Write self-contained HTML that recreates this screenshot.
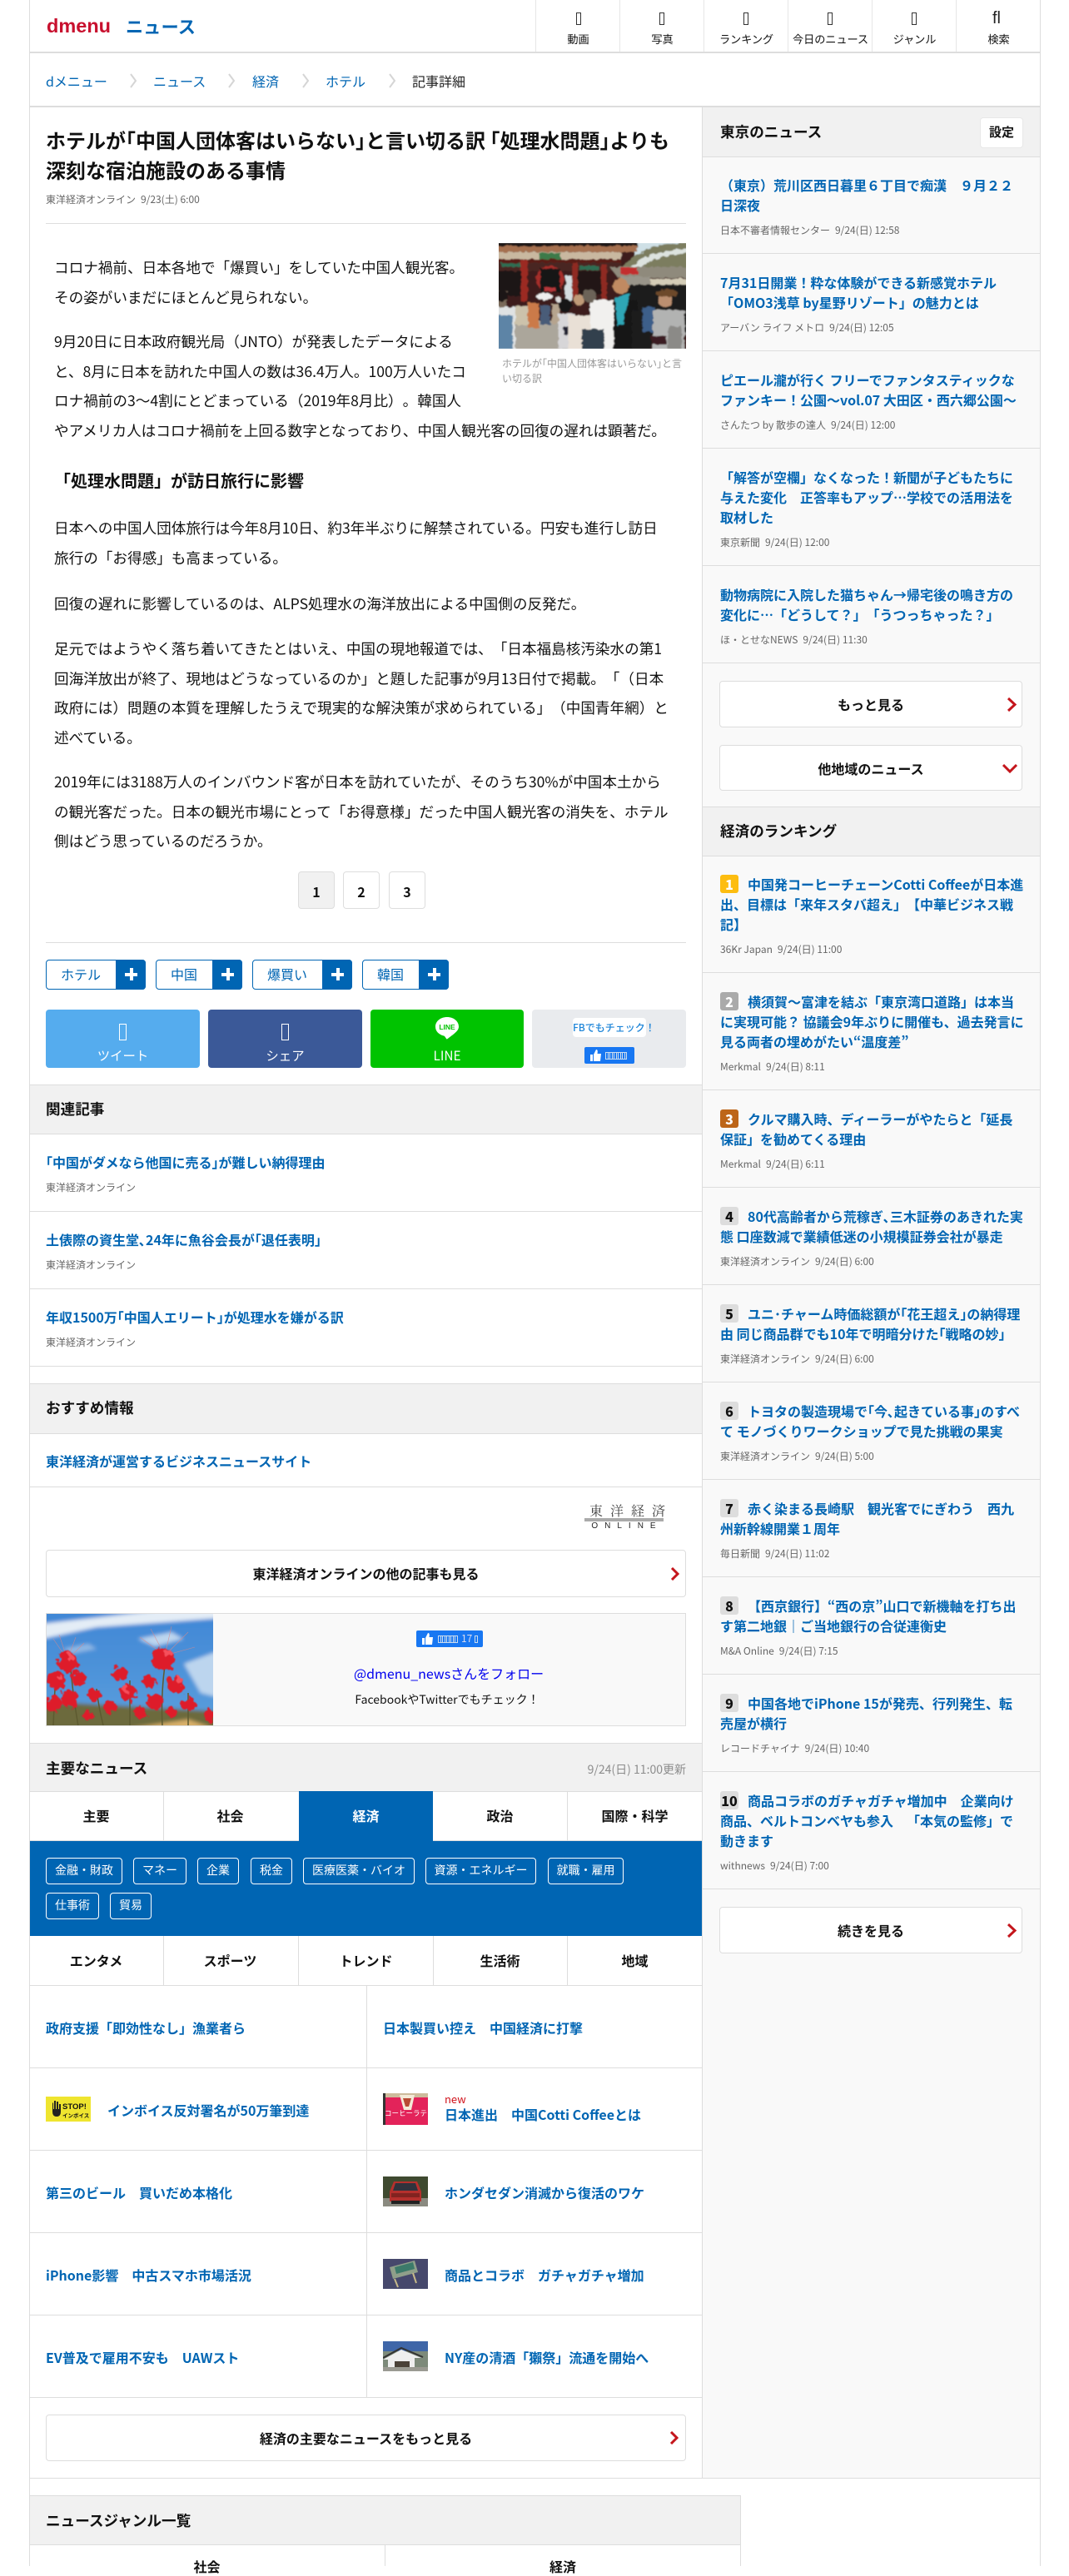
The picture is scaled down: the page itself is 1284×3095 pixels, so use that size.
<!DOCTYPE html>
<html lang="ja"><head><meta charset="utf-8"><title>ホテルが｢中国人団体客はいらない｣と言い切る訳</title>
<style>
html,body{margin:0;padding:0}
body{width:1284px;height:3083px;position:relative;overflow:hidden;background:#fff;color:#111;font-family:"Noto Sans CJK JP","Liberation Sans",sans-serif;font-size:16px;text-spacing-trim:space-all;font-variant-east-asian:normal}
.a{position:absolute;white-space:nowrap}
.v{position:absolute;width:1px;background:#ddd}
.h{position:absolute;height:1px;background:#ddd}
.navl{position:absolute;top:38px;width:101px;text-align:center;font-size:13.2px;line-height:18px;letter-spacing:-.1px}
.tofu{position:absolute;box-sizing:border-box;border:1px solid #333}
.ts{position:absolute;box-sizing:border-box;height:9px;border-top:1px solid #cde;border-bottom:1px solid #cde;background:repeating-linear-gradient(90deg,#cde 0 1px,transparent 1px 3px,#cde 3px 4px,transparent 4px 5px)}
.bc{position:absolute;top:86px;line-height:22px;font-size:16px;color:#0065b3;white-space:nowrap}
.p{position:absolute;left:65px;font-size:17.6px;line-height:35.5px;white-space:nowrap;color:#111}
.sh{position:absolute;top:1213px;width:185px;height:70px;border-radius:4px;color:#fff;text-align:center;font-size:15.4px}
.sh span{position:absolute;left:0;right:0;top:44px;line-height:22px}
.tag{position:absolute;top:1153px;height:36px;box-sizing:border-box;border:1px solid #0065b3;border-radius:4px;color:#0065b3;line-height:33px;padding-left:17px;background:#fff}
.tag b{position:absolute;right:-1px;top:-1px;width:36px;height:36px;background:#0065b3;border-radius:0 4px 4px 0}
.tag b:before{content:"";position:absolute;left:11px;top:16px;width:15px;height:4px;background:#fff}
.tag b:after{content:"";position:absolute;left:17px;top:10px;width:4px;height:15px;background:#fff}
.pg{position:absolute;top:1047px;width:44px;height:45px;box-sizing:border-box;border:1px solid #ddd;border-radius:4px;text-align:center;font-weight:700;line-height:46px;font-size:16px}
.sec{position:absolute;background:#f1f1f1;border-top:1px solid #ddd;border-bottom:1px solid #ddd;box-sizing:border-box}
.sec div{position:absolute;left:19px;top:0;font-size:17.6px;font-weight:700;white-space:nowrap}
.lnk{position:absolute;color:#0065b3;font-weight:700;white-space:nowrap;line-height:24px}
.m{position:absolute;left:55px;font-size:12px;color:#666;line-height:18px;white-space:nowrap}
.btn{position:absolute;box-sizing:border-box;border:1px solid #ddd;border-radius:4px;background:#fff;text-align:center;font-weight:700}
.btn svg{position:absolute}
.chip{position:absolute;height:32px;box-sizing:border-box;border:1px solid #fff;border-radius:4px;color:#fff;font-size:14px;line-height:29px;text-align:center;white-space:nowrap}
.tab{position:absolute;width:161px;text-align:center;font-weight:700;line-height:24px}
.sb{position:absolute;left:844px;top:129px;width:405px;height:2848px;background:#f9f9f9}
.it{position:absolute;left:0;width:405px;box-sizing:border-box;border-bottom:1px solid #ddd}
.it .t{position:absolute;left:21px;top:22px;color:#0065b3;font-weight:700;line-height:24px;white-space:nowrap;font-size:16px}
.it .d{position:absolute;left:21px;bottom:18px;font-size:12px;line-height:18px;color:#666;white-space:nowrap}
.bd{display:inline-block;width:22px;height:22px;border-radius:3px;text-align:center;line-height:22px;margin-right:11px;font-size:16px;vertical-align:0;background:#ddd;color:#111}
</style></head><body>

<div class="v" style="left:35px;top:0;height:3083px"></div>
<div class="v" style="left:1249px;top:0;height:3083px"></div>

<!-- header -->
<div class="a" style="left:56px;top:14px;font:700 23.500px/34px 'Liberation Sans',sans-serif;color:#c8102e">dmenu</div>
<div class="a" style="left:151px;top:16px;font-size:21px;font-weight:700;line-height:32px;color:#0065b3;letter-spacing:.3px">ニュース</div>
<div class="v" style="left:643px;top:0;height:63px;background:#e6e6e6"></div>
<div class="v" style="left:744px;top:0;height:63px;background:#e6e6e6"></div>
<div class="v" style="left:845px;top:0;height:63px;background:#e6e6e6"></div>
<div class="v" style="left:946px;top:0;height:63px;background:#e6e6e6"></div>
<div class="v" style="left:1047px;top:0;height:63px;background:#e6e6e6"></div>
<div class="v" style="left:1148px;top:0;height:63px;background:#e6e6e6"></div>
<div class="tofu" style="left:692px;top:15px;width:6px;height:15px"></div>
<div class="tofu" style="left:792px;top:15px;width:6px;height:15px"></div>
<div class="tofu" style="left:893px;top:15px;width:6px;height:15px"></div>
<div class="tofu" style="left:994px;top:15px;width:6px;height:15px"></div>
<div class="tofu" style="left:1095px;top:15px;width:6px;height:15px"></div>
<div class="a" style="left:1192px;top:10px;font:400 20px/24px 'Liberation Sans',sans-serif;color:#222">fl</div>
<div class="navl" style="left:644px">動画</div>
<div class="navl" style="left:745px">写真</div>
<div class="navl" style="left:846px">ランキング</div>
<div class="navl" style="left:947px">今日のニュース</div>
<div class="navl" style="left:1048px">ジャンル</div>
<div class="navl" style="left:1149px">検索</div>
<div class="h" style="left:35px;top:62px;width:1214px;height:2px"></div>

<!-- breadcrumb -->
<div class="bc" style="left:55px">dメニュー</div>
<div class="bc" style="left:184px">ニュース</div>
<div class="bc" style="left:303px">経済</div>
<div class="bc" style="left:391px">ホテル</div>
<div class="bc" style="left:495px;color:#222">記事詳細</div>
<svg class="a" style="left:0;top:88px" width="500" height="18" fill="none" stroke="#d5d5d5" stroke-width="2"><path d="M157 1l6 8-6 8M275 1l6 8-6 8M364 1l6 8-6 8M468 1l6 8-6 8"/></svg>
<div class="h" style="left:35px;top:127px;width:1214px;height:2px"></div>

<div class="v" style="left:843px;top:129px;height:2848px"></div>

<!-- article -->
<div class="a" style="left:55px;top:150px;font-size:24px;font-weight:700;line-height:36px;color:#111">ホテルが｢中国人団体客はいらない｣と言い切る訳 ｢処理水問題｣よりも<br>深刻な宿泊施設のある事情</div>
<div class="a" style="left:55px;top:231px;font-size:12px;line-height:18px;color:#666">東洋経済オンライン&ensp;9/23(土) 6:00</div>
<div class="h" style="left:55px;top:268px;width:769px"></div>

<svg class="a" style="left:599px;top:292px" width="225" height="127" viewBox="0 0 675 380">
<defs><filter id="b1" x="0" y="0" width="1" height="1"><feTurbulence type="fractalNoise" baseFrequency=".06" numOctaves="2" seed="4"/><feDisplacementMap in="SourceGraphic" scale="14"/><feGaussianBlur stdDeviation="2.500"/></filter><clipPath id="c1"><rect width="675" height="380"/></clipPath></defs>
<g clip-path="url(#c1)"><g filter="url(#b1)">
<rect x="-10" y="-10" width="700" height="400" fill="#3d1f1b"/>
<path d="M490-10h200v90l-200 30z" fill="#cfe0e6"/>
<rect x="-10" y="-10" width="510" height="22" fill="#1c1512"/><rect x="-10" y="10" width="510" height="22" fill="#a5704f"/>
<rect x="-10" y="32" width="450" height="26" fill="#c9b8a0"/><rect x="145" y="35" width="80" height="24" fill="#3d7a4a"/>
<rect x="-10" y="58" width="450" height="12" fill="#5a1d18"/>
<rect x="-10" y="70" width="450" height="30" fill="#4a2620"/><rect x="10" y="72" width="70" height="14" fill="#2f6e52"/><rect x="290" y="82" width="70" height="14" fill="#2f6e52"/>
<rect x="80" y="60" width="24" height="150" fill="#9c2b22"/><rect x="265" y="70" width="20" height="130" fill="#8f2a20"/><rect x="370" y="75" width="18" height="130" fill="#8f2a20"/>
<rect x="-10" y="100" width="90" height="90" fill="#1e1512"/><rect x="285" y="100" width="85" height="85" fill="#241714"/>
<ellipse cx="185" cy="130" rx="50" ry="48" fill="#a62d2a"/><rect x="150" y="92" width="70" height="85" fill="#161212"/><rect x="165" y="160" width="40" height="14" fill="#b5383a"/>
<rect x="240" y="118" width="25" height="90" fill="#d5dde0"/>
<path d="M440 90Q520 10 600 5L690-5v95z" fill="#7c7d5e"/><path d="M475 85Q540 25 690 20v15q-125 5-185 60z" fill="#dde3df"/>
<path d="M400 85h290v40H430z" fill="#8f8a7c"/><rect x="440" y="88" width="60" height="24" fill="#c22d2e"/>
<rect x="545" y="128" width="145" height="26" fill="#d4cdb8"/><rect x="440" y="120" width="105" height="30" fill="#99958a"/>
<rect x="440" y="150" width="250" height="180" fill="#1c1c1b"/>
<path d="M60 280h320v110H50z" fill="#aba69b"/>
<rect x="-10" y="170" width="40" height="220" fill="#7a6a5a"/><rect x="-10" y="230" width="70" height="160" fill="#dfe2e3"/><rect x="-10" y="260" width="60" height="130" fill="#5d84a6"/><circle cx="12" cy="190" r="22" fill="#1a1412"/>
<ellipse cx="165" cy="192" rx="30" ry="13" fill="#eee"/><circle cx="215" cy="203" r="10" fill="#ddd"/>
<rect x="60" y="225" width="55" height="70" fill="#ccc2ab"/><rect x="105" y="215" width="40" height="90" fill="#cb7a4a"/><rect x="150" y="225" width="35" height="70" fill="#485c78"/><rect x="190" y="220" width="30" height="70" fill="#b6a48e"/>
<rect x="215" y="255" width="60" height="125" fill="#d7d6d8"/><rect x="235" y="300" width="40" height="30" fill="#223"/><circle cx="240" cy="225" r="24" fill="#191414"/>
<rect x="250" y="260" width="90" height="130" fill="#e9e0d6"/><circle cx="290" cy="205" r="19" fill="#c09a78"/>
<rect x="330" y="205" width="85" height="185" fill="#f1f0ee"/><circle cx="328" cy="190" r="24" fill="#6c6359"/><rect x="300" y="310" width="80" height="80" fill="#30404e"/>
<rect x="415" y="205" width="85" height="185" fill="#151515"/><circle cx="440" cy="155" r="28" fill="#c08a62"/><path d="M418 195l55-15-25 110-20 10z" fill="#2fa6b6"/>
<rect x="480" y="240" width="70" height="150" fill="#1a1a1f"/><rect x="518" y="230" width="45" height="90" fill="#3d5f8a"/>
<rect x="555" y="240" width="115" height="150" fill="#b2b3b2"/><circle cx="600" cy="205" r="26" fill="#bb8f70"/><ellipse cx="605" cy="180" rx="40" ry="14" fill="#6d4a2c"/><rect x="610" y="300" width="50" height="90" fill="#8b8a87"/>
<rect x="555" y="335" width="50" height="30" fill="#3a1d20"/>
</g></g></svg>
<div class="a" style="left:603px;top:428px;font-size:12px;line-height:18px;color:#999">ホテルが｢中国人団体客はいらない｣と言<br>い切る訳</div>

<div class="p" style="top:304px">コロナ禍前、日本各地で「爆買い」をしていた中国人観光客。<br>その姿がいまだにほとんど見られない。</div>
<div class="p" style="top:393px">9月20日に日本政府観光局（JNTO）が発表したデータによる<br>と、8月に日本を訪れた中国人の数は36.4万人。100万人いたコ<br>ロナ禍前の3～4割にとどまっている（2019年8月比）。韓国人<br>やアメリカ人はコロナ禍前を上回る数字となっており、中国人観光客の回復の遅れは顕著だ。</div>
<div class="a" style="left:65px;top:562px;font-size:20px;font-weight:700;line-height:30px">「処理水問題」が訪日旅行に影響</div>
<div class="p" style="top:617px">日本への中国人団体旅行は今年8月10日、約3年半ぶりに解禁されている。円安も進行し訪日<br>旅行の「お得感」も高まっている。</div>
<div class="p" style="top:708px">回復の遅れに影響しているのは、ALPS処理水の海洋放出による中国側の反発だ。</div>
<div class="p" style="top:762px">足元ではようやく落ち着いてきたとはいえ、中国の現地報道では、「日本福島核汚染水の第1<br>回海洋放出が終了、現地はどうなっているのか」と題した記事が9月13日付で掲載。「（日本<br>政府には）問題の本質を理解したうえで現実的な解決策が求められている」（中国青年網）と<br>述べている。</div>
<div class="p" style="top:922px">2019年には3188万人のインバウンド客が日本を訪れていたが、そのうち30%が中国本土から<br>の観光客だった。日本の観光市場にとって「お得意様」だった中国人観光客の消失を、ホテル<br>側はどう思っているのだろうか。</div>

<div class="pg" style="left:358px;background:#f1f1f1">1</div>
<div class="pg" style="left:412px">2</div>
<div class="pg" style="left:467px">3</div>
<div class="h" style="left:55px;top:1132px;width:769px"></div>

<div class="tag" style="left:55px;width:120px">ホテル<b></b></div>
<div class="tag" style="left:187px;width:104px">中国<b></b></div>
<div class="tag" style="left:303px;width:120px">爆買い<b></b></div>
<div class="tag" style="left:435px;width:104px">韓国<b></b></div>

<div class="sh" style="left:55px;background:#55acee"><i class="tofu" style="left:88px;top:17px;width:9px;height:20px;border-color:#fff"></i><span>ツイート</span></div>
<div class="sh" style="left:250px;background:#3b5998"><i class="tofu" style="left:88px;top:17px;width:9px;height:20px;border-color:#fff"></i><span>シェア</span></div>
<div class="sh" style="left:445px;width:184px;background:#00c300"><svg class="a" style="left:78px;top:9px" width="28" height="27" viewBox="0 0 28 27"><path d="M14 0C6 0 0 5 0 11.500C0 17 4 21 10 22.500C12 23 13 27 14 26.500C16 25 20 22 23 19.500C26 17 28 14.500 28 11.500C28 5 22 0 14 0z" fill="#fff"/><text x="14" y="15" text-anchor="middle" font-size="8.500" font-weight="700" fill="#00c300" font-family="Liberation Sans,sans-serif">LINE</text></svg><span>LINE</span></div>
<div class="sh" style="left:639px;background:#e9ebee"><div class="a" style="left:49px;top:10px;width:88px;height:23px;background:#fff;border-radius:4px;color:#1c84d8;font-size:12px;line-height:23px;text-align:center;font-weight:500">FBでもチェック！</div><div class="a" style="left:63px;top:45px;width:60px;height:20px;background:#1877f2;border-radius:2px"><svg class="a" style="left:7px;top:3px" width="13" height="14" viewBox="0 0 13 14"><path d="M0 6h3v8H0zM4 6l3-6c2 0 2 2 1.500 5H13l-1 9H4z" fill="#fff"/></svg><i class="ts" style="left:25px;top:6px;width:26px"></i></div></div>

<!-- related -->
<div class="sec" style="left:36px;top:1303px;width:807px;height:60px"><div style="line-height:58px">関連記事</div></div>
<div class="lnk" style="left:55px;top:1384px">｢中国がダメなら他国に売る｣が難しい納得理由</div>
<div class="m" style="top:1418px">東洋経済オンライン</div>
<div class="h" style="left:36px;top:1455px;width:807px"></div>
<div class="lnk" style="left:55px;top:1477px">土俵際の資生堂､24年に魚谷会長が｢退任表明｣</div>
<div class="m" style="top:1511px">東洋経済オンライン</div>
<div class="h" style="left:36px;top:1548px;width:807px"></div>
<div class="lnk" style="left:55px;top:1570px">年収1500万｢中国人エリート｣が処理水を嫌がる訳</div>
<div class="m" style="top:1604px">東洋経済オンライン</div>
<div class="h" style="left:36px;top:1641px;width:807px"></div>

<!-- recommended -->
<div class="sec" style="left:36px;top:1662px;width:807px;height:61px"><div style="line-height:58px">おすすめ情報</div></div>
<div class="lnk" style="left:55px;top:1743px">東洋経済が運営するビジネスニュースサイト</div>
<div class="h" style="left:36px;top:1786px;width:807px"></div>
<div class="a" style="left:703px;top:1804px;width:94px;text-align:center;font-family:'Noto Serif CJK SC',serif;font-size:16px;line-height:22px;letter-spacing:9px;color:#444;text-indent:5px">東洋経済</div>
<div class="a" style="left:702px;top:1824px;width:95px;height:4px;background:#aaa"></div>
<div class="a" style="left:703px;top:1828px;width:94px;text-align:center;font:400 10px/11px 'Liberation Sans',sans-serif;letter-spacing:8px;color:#222;text-indent:6px">ONLINE</div>
<div class="btn" style="left:55px;top:1862px;width:769px;height:57px;line-height:55px">東洋経済オンラインの他の記事も見る<svg style="left:749px;top:20px" width="11" height="16" fill="none" stroke="#c4161c" stroke-width="3"><path d="M2 1l7 7-7 7"/></svg></div>

<div class="a" style="left:55px;top:1938px;width:769px;height:136px;box-sizing:border-box;border:1px solid #ddd;background:#f9f9f9"></div>
<svg class="a" style="left:56px;top:1939px" width="200" height="134" viewBox="0 0 200 134">
<defs><filter id="b2" x="0" y="0" width="1" height="1"><feGaussianBlur stdDeviation="2.500"/></filter><filter id="b3" x="-.1" y="-.1" width="1.200" height="1.200"><feTurbulence type="fractalNoise" baseFrequency=".14" numOctaves="2" seed="7"/><feDisplacementMap in="SourceGraphic" scale="12"/><feGaussianBlur stdDeviation=".6"/></filter><linearGradient id="sk" x1="0" y1="0" x2="0" y2="1"><stop offset="0" stop-color="#3f86d6"/><stop offset="1" stop-color="#5b9fdc"/></linearGradient><clipPath id="c2"><rect width="200" height="134"/></clipPath></defs>
<g clip-path="url(#c2)">
<g filter="url(#b2)"><rect x="-5" y="-5" width="210" height="144" fill="url(#sk)"/>
<path d="M-5 12L140-5h70v10L60 16-5 30z" fill="#e4edf6"/><path d="M165 60l40-15v55l-20-5zM110 30l40-8 14 8-34 9z" fill="#bcd5ee"/><path d="M20 42l30-6 10 6-30 6z" fill="#8fb8e4"/>
<path d="M-5 139V105l210 12v22z" fill="#6c6a3c"/><path d="M90 139l80-12 35 12z" fill="#d9b06a"/></g>
<g stroke="#5d5a30" stroke-width="1.500" fill="none"><path d="M28 55q3 40 10 80M143 55q-6 40-4 80M60 90q2 20 8 44M100 80v54M170 95v39M10 90l-2 44"/></g>
<g stroke="#d9888a" stroke-width=".6" fill="none" opacity=".8"><path d="M25 55L8 30M25 55L15 25M25 55L35 28M25 55L45 35M142 50L112 28M142 50L125 18M142 50L150 15M142 50L170 22M142 50L178 40"/></g>
<g filter="url(#b3)"><g fill="#de1f2b"><circle cx="25" cy="58" r="12"/><circle cx="12" cy="80" r="11"/><circle cx="38" cy="78" r="9"/><circle cx="28" cy="102" r="11"/><circle cx="8" cy="108" r="10"/><circle cx="58" cy="98" r="8"/><circle cx="88" cy="72" r="9"/><circle cx="98" cy="95" r="10"/><circle cx="76" cy="112" r="8"/><circle cx="140" cy="55" r="14"/><circle cx="124" cy="82" r="8"/><circle cx="155" cy="85" r="10"/><circle cx="130" cy="105" r="10"/><circle cx="170" cy="108" r="9"/><circle cx="195" cy="122" r="7"/><circle cx="112" cy="118" r="7"/><circle cx="50" cy="122" r="6"/><circle cx="150" cy="118" r="6"/></g><g fill="#f6505c"><circle cx="28" cy="52" r="4"/><circle cx="146" cy="48" r="5"/><circle cx="95" cy="90" r="4"/><circle cx="160" cy="80" r="4"/><circle cx="15" cy="75" r="3"/></g></g>
</g></svg>
<div class="a" style="left:500px;top:1959px;width:80px;height:20px;background:#1877f2;border-radius:2px"><svg class="a" style="left:7px;top:3px" width="13" height="14" viewBox="0 0 13 14"><path d="M0 6h3v8H0zM4 6l3-6c2 0 2 2 1.500 5H13l-1 9H4z" fill="#fff"/></svg><i class="ts" style="left:26px;top:6px;width:24px"></i><span class="a" style="left:54px;top:0;color:#dde;font-size:12px;line-height:20px">17</span><i class="tofu" style="left:70px;top:6px;width:4px;height:9px;border-color:#cde"></i></div>
<div class="a" style="left:425px;width:228px;top:1998px;text-align:center;color:#0000ee;line-height:24px">@dmenu_newsさんをフォロー</div>
<div class="a" style="left:425px;width:224px;top:2032px;text-align:center;font-size:14px;line-height:20px;color:#111">FacebookやTwitterでもチェック！</div>

<!-- main news -->
<div class="sec" style="left:36px;top:2094px;width:807px;height:59px"><div style="line-height:60px">主要なニュース</div></div>
<div class="a" style="right:460px;top:2116px;font-size:14px;line-height:20px;color:#8c8c8c">9/24(日) 11:00更新</div>
<div class="a" style="left:359px;top:2152px;width:161px;height:60px;background:#0065b3"></div>
<div class="a" style="left:36px;top:2212px;width:807px;height:114px;background:#0065b3"></div>
<div class="h" style="left:36px;top:2211px;width:323px"></div><div class="h" style="left:520px;top:2211px;width:323px"></div>
<div class="v" style="left:196px;top:2153px;height:59px"></div><div class="v" style="left:681px;top:2153px;height:59px"></div>
<div class="tab" style="left:35px;top:2169px">主要</div>
<div class="tab" style="left:196px;top:2169px">社会</div>
<div class="tab" style="left:359px;top:2169px;color:#fff">経済</div>
<div class="tab" style="left:520px;top:2169px">政治</div>
<div class="tab" style="left:682px;top:2169px">国際・科学</div>
<div class="chip" style="left:55px;top:2232px;width:92px">金融・財政</div>
<div class="chip" style="left:160px;top:2232px;width:64px">マネー</div>
<div class="chip" style="left:237px;top:2232px;width:50px">企業</div>
<div class="chip" style="left:301px;top:2232px;width:50px">税金</div>
<div class="chip" style="left:364px;top:2232px;width:134px">医療医薬・バイオ</div>
<div class="chip" style="left:511px;top:2232px;width:133px">資源・エネルギー</div>
<div class="chip" style="left:658px;top:2232px;width:91px">就職・雇用</div>
<div class="chip" style="left:55px;top:2274px;width:64px">仕事術</div>
<div class="chip" style="left:132px;top:2274px;width:50px">貿易</div>
<div class="v" style="left:196px;top:2326px;height:59px"></div><div class="v" style="left:358px;top:2326px;height:59px"></div><div class="v" style="left:520px;top:2326px;height:59px"></div><div class="v" style="left:681px;top:2326px;height:59px"></div>
<div class="tab" style="left:35px;top:2343px">エンタメ</div>
<div class="tab" style="left:196px;top:2343px">スポーツ</div>
<div class="tab" style="left:359px;top:2343px">トレンド</div>
<div class="tab" style="left:520px;top:2343px">生活術</div>
<div class="tab" style="left:682px;top:2343px">地域</div>
<div class="h" style="left:36px;top:2385px;width:807px"></div>
<div class="h" style="left:36px;top:2484px;width:807px"></div>
<div class="h" style="left:36px;top:2583px;width:807px"></div>
<div class="h" style="left:36px;top:2682px;width:807px"></div>
<div class="h" style="left:36px;top:2781px;width:807px"></div>
<div class="h" style="left:36px;top:2880px;width:807px"></div>
<div class="v" style="left:440px;top:2385px;height:495px"></div>
<div class="lnk" style="left:55px;top:2424px">政府支援「即効性なし」漁業者ら</div>
<div class="lnk" style="left:460px;top:2424px">日本製買い控え　中国経済に打撃</div>
<svg class="a" style="left:55px;top:2519px" width="54" height="30" viewBox="0 0 54 30"><rect width="54" height="30" fill="#efe52f"/><path d="M8 8v10q0 6 5 6t5-6v-9h-2v6h-1V6h-2v9h-1V5h-2v10h-1V7z" fill="#222"/><text x="20" y="15" font-size="9.500" font-weight="700" fill="#111" font-family="Liberation Sans,sans-serif">STOP!</text><text x="20" y="25" font-size="6.500" font-weight="700" fill="#111">インボイス</text></svg>
<div class="lnk" style="left:129px;top:2523px">インボイス反対署名が50万筆到達</div>
<svg class="a" style="left:460px;top:2515px" width="54" height="38" viewBox="0 0 54 38"><rect width="54" height="38" fill="#e3235a"/><rect width="54" height="5" fill="#cdbb9c"/><path d="M20 2h18l-4 18H25z" fill="#f4ead8"/><path d="M24 6h10l-3 10h-4z" fill="#b84a33"/><rect x="0" y="0" width="3" height="38" fill="#333"/><text x="2" y="27" font-size="8.500" fill="#fff">コーヒーラテ</text></svg>
<div class="a" style="left:534px;top:2513px;font-size:13px;line-height:18px;color:#d0121b">new</div>
<div class="lnk" style="left:534px;top:2528px">日本進出　中国Cotti Coffeeとは</div>
<div class="lnk" style="left:55px;top:2622px">第三のビール　買いだめ本格化</div>
<svg class="a" style="left:460px;top:2615px" width="54" height="36" viewBox="0 0 54 36"><rect width="54" height="36" fill="#3f4a30"/><rect y="26" width="54" height="10" fill="#8a8a80"/><path d="M8 18l5-12h28l5 12v12H8z" fill="#b5302d"/><path d="M15 8h24l3 9H12z" fill="#30333d"/><rect x="10" y="20" width="34" height="5" fill="#822320"/><rect x="10" y="29" width="34" height="4" fill="#222"/></svg>
<div class="lnk" style="left:534px;top:2622px">ホンダセダン消滅から復活のワケ</div>
<div class="lnk" style="left:55px;top:2721px">iPhone影響　中古スマホ市場活況</div>
<svg class="a" style="left:460px;top:2714px" width="54" height="36" viewBox="0 0 54 36"><rect width="54" height="36" fill="#46486c"/><path d="M8 10l30-8 4 14-30 8z" fill="#8f9f8a"/><path d="M14 10l22-6 2 8-22 6z" fill="#3c7a6a"/><path d="M14 24l4 10M36 17l4 12" stroke="#c6b98a" stroke-width="2"/></svg>
<div class="lnk" style="left:534px;top:2721px">商品とコラボ　ガチャガチャ増加</div>
<div class="lnk" style="left:55px;top:2820px">EV普及で雇用不安も　UAWスト</div>
<svg class="a" style="left:460px;top:2813px" width="54" height="36" viewBox="0 0 54 36"><rect width="54" height="14" fill="#3f66a8"/><rect y="12" width="54" height="24" fill="#7d8a7a"/><path d="M0 22L22 10l24 10H38v12H6V22z" fill="#eee"/><path d="M0 20L22 8l26 11" stroke="#333" stroke-width="2" fill="none"/><rect x="14" y="24" width="18" height="8" fill="#4a4238"/><rect y="31" width="54" height="5" fill="#9a9a92"/></svg>
<div class="lnk" style="left:534px;top:2820px">NY産の清酒「獺祭」流通を開始へ</div>
<div class="btn" style="left:55px;top:2901px;width:769px;height:56px;line-height:55px">経済の主要なニュースをもっと見る<svg style="left:748px;top:19px" width="11" height="16" fill="none" stroke="#c4161c" stroke-width="3"><path d="M2 1l7 7-7 7"/></svg></div>

<!-- sidebar -->
<div class="sb">
 <div class="a" style="left:0;top:0;width:405px;height:60px;box-sizing:border-box;background:#f1f1f1;border-bottom:1px solid #ddd;"></div>
 <div class="a" style="left:21px;top:14px;font-size:17.6px;font-weight:700;line-height:32px">東京のニュース</div>
 <div class="a" style="left:333px;top:12px;width:52px;height:37px;box-sizing:border-box;background:#fff;border:1px solid #e8e8e8;border-radius:4px;text-align:center;font-size:15px;font-weight:700;line-height:34px">設定</div>
 <div class="it" style="top:59px;height:117px"><div class="t">（東京）荒川区西日暮里６丁目で痴漢　９月２２<br>日深夜</div><div class="d">日本不審者情報センター&ensp;9/24(日) 12:58</div></div>
 <div class="it" style="top:176px;height:117px"><div class="t">7月31日開業！粋な体験ができる新感覚ホテル<br>「OMO3浅草 by星野リゾート」の魅力とは</div><div class="d">アーバン ライフ メトロ&ensp;9/24(日) 12:05</div></div>
 <div class="it" style="top:293px;height:117px"><div class="t">ピエール瀧が行く フリーでファンタスティックな<br>ファンキー！公園〜vol.07 大田区・西六郷公園〜</div><div class="d">さんたつ by 散歩の達人&ensp;9/24(日) 12:00</div></div>
 <div class="it" style="top:410px;height:141px"><div class="t">「解答が空欄」なくなった！新聞が子どもたちに<br>与えた変化　正答率もアップ…学校での活用法を<br>取材した</div><div class="d">東京新聞&ensp;9/24(日) 12:00</div></div>
 <div class="it" style="top:551px;height:117px"><div class="t">動物病院に入院した猫ちゃん→帰宅後の鳴き方の<br>変化に…「どうして？」「うつっちゃった？」</div><div class="d">ほ・とせなNEWS&ensp;9/24(日) 11:30</div></div>
 <div class="btn" style="left:20px;top:689px;width:364px;height:56px;line-height:54px">もっと見る<svg style="left:344px;top:19px" width="13" height="17" fill="none" stroke="#c4161c" stroke-width="3"><path d="M2 1l8 7.500-8 7.500"/></svg></div>
 <div class="btn" style="left:20px;top:766px;width:364px;height:55px;line-height:54px">他地域のニュース<svg style="left:339px;top:21px" width="18" height="12" fill="none" stroke="#c4161c" stroke-width="3"><path d="M1 2l8 8 8-8"/></svg></div>
 <div class="a" style="left:0;top:840px;width:405px;height:60px;box-sizing:border-box;background:#f1f1f1;border-top:1px solid #ddd;border-bottom:1px solid #ddd"></div>
 <div class="a" style="left:21px;top:854px;font-size:17.6px;font-weight:700;line-height:32px">経済のランキング</div>
 <div class="it" style="top:899px;height:141px"><div class="t"><b class="bd" style="background:#fdbd10;color:#fff">1</b>中国発コーヒーチェーンCotti Coffeeが日本進<br>出、目標は「来年スタバ超え」【中華ビジネス戦<br>記】</div><div class="d">36Kr Japan&ensp;9/24(日) 11:00</div></div>
 <div class="it" style="top:1040px;height:141px"><div class="t"><b class="bd" style="background:#aaa;color:#fff">2</b>横須賀〜富津を結ぶ「東京湾口道路」は本当<br>に実現可能？ 協議会9年ぶりに開催も、過去発言に<br>見る両者の埋めがたい“温度差”</div><div class="d">Merkmal&ensp;9/24(日) 8:11</div></div>
 <div class="it" style="top:1181px;height:117px"><div class="t"><b class="bd" style="background:#bd6518;color:#fff">3</b>クルマ購入時、ディーラーがやたらと「延長<br>保証」を勧めてくる理由</div><div class="d">Merkmal&ensp;9/24(日) 6:11</div></div>
 <div class="it" style="top:1298px;height:117px"><div class="t"><b class="bd">4</b>80代高齢者から荒稼ぎ､三木証券のあきれた実<br>態 口座数減で業績低迷の小規模証券会社が暴走</div><div class="d">東洋経済オンライン&ensp;9/24(日) 6:00</div></div>
 <div class="it" style="top:1415px;height:117px"><div class="t"><b class="bd">5</b>ユニ･チャーム時価総額が｢花王超え｣の納得理<br>由 同じ商品群でも10年で明暗分けた｢戦略の妙｣</div><div class="d">東洋経済オンライン&ensp;9/24(日) 6:00</div></div>
 <div class="it" style="top:1532px;height:117px"><div class="t"><b class="bd">6</b>トヨタの製造現場で｢今､起きている事｣のすべ<br>て モノづくりワークショップで見た挑戦の果実</div><div class="d">東洋経済オンライン&ensp;9/24(日) 5:00</div></div>
 <div class="it" style="top:1649px;height:117px"><div class="t"><b class="bd">7</b>赤く染まる長崎駅　観光客でにぎわう　西九<br>州新幹線開業１周年</div><div class="d">毎日新聞&ensp;9/24(日) 11:02</div></div>
 <div class="it" style="top:1766px;height:117px"><div class="t"><b class="bd">8</b>【西京銀行】“西の京”山口で新機軸を打ち出<br>す第二地銀｜ご当地銀行の合従連衡史</div><div class="d">M&amp;A Online&ensp;9/24(日) 7:15</div></div>
 <div class="it" style="top:1883px;height:117px"><div class="t"><b class="bd">9</b>中国各地でiPhone 15が発売、行列発生、転<br>売屋が横行</div><div class="d">レコードチャイナ&ensp;9/24(日) 10:40</div></div>
 <div class="it" style="top:2000px;height:141px"><div class="t"><b class="bd">10</b>商品コラボのガチャガチャ増加中　企業向け<br>商品、ベルトコンベヤも参入　「本気の監修」で<br>動きます</div><div class="d">withnews&ensp;9/24(日) 7:00</div></div>
 <div class="btn" style="left:20px;top:2162px;width:364px;height:56px;line-height:54px">続きを見る<svg style="left:344px;top:19px" width="13" height="17" fill="none" stroke="#c4161c" stroke-width="3"><path d="M2 1l8 7.500-8 7.500"/></svg></div>
</div>

<div class="h" style="left:35px;top:2977px;width:1214px"></div>

<!-- genre -->
<div class="a" style="left:35px;top:2998px;width:855px;height:60px;box-sizing:border-box;background:#f1f1f1;border:1px solid #ddd"></div>
<div class="a" style="left:55px;top:3013px;font-size:17.6px;font-weight:700;line-height:32px">ニュースジャンル一覧</div>
<div class="v" style="left:889px;top:2998px;height:85px"></div>
<div class="v" style="left:462px;top:3058px;height:25px"></div>
<div class="a" style="left:35px;width:427px;top:3071px;text-align:center;font-weight:700;line-height:24px">社会</div>
<div class="a" style="left:463px;width:426px;top:3071px;text-align:center;font-weight:700;line-height:24px">経済</div>
</body></html>
